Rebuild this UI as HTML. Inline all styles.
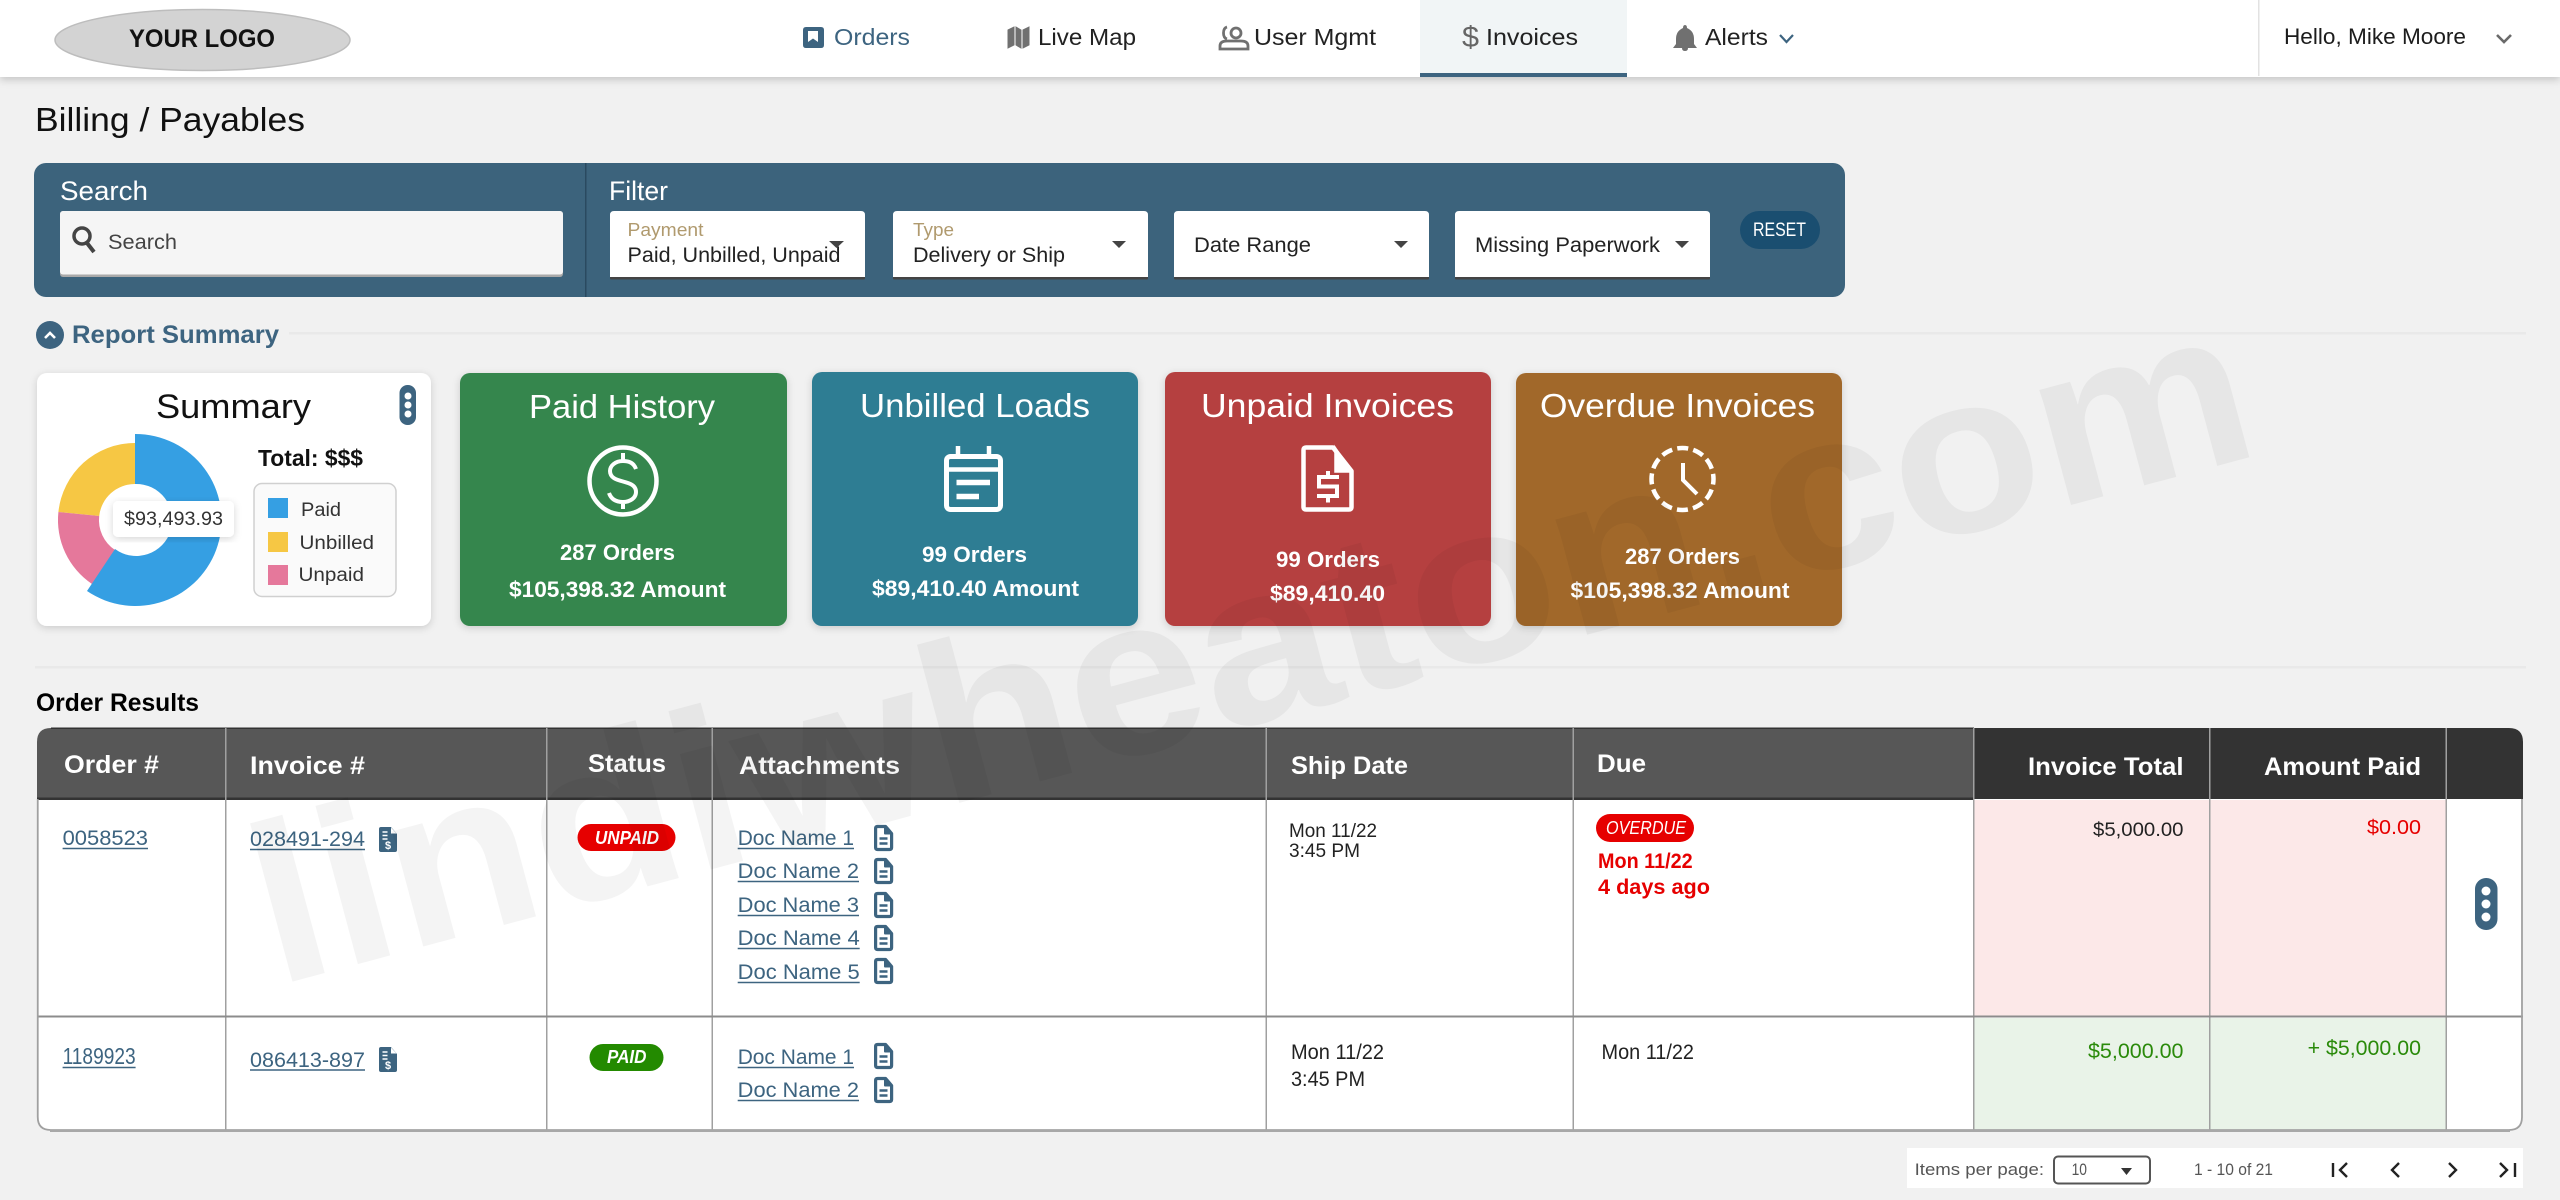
<!DOCTYPE html>
<html lang="en"><head><meta charset="utf-8"><title>Billing / Payables</title>
<style>
html,body{margin:0;padding:0;background:#f1f1f1;width:2560px;height:1200px;overflow:hidden}
svg{display:block}
text{font-family:"Liberation Sans",Arial,sans-serif}
.b{font-weight:700}
.lk{fill:#3d6480}
</style></head><body>
<svg xmlns="http://www.w3.org/2000/svg" width="2560" height="1200" viewBox="0 0 2560 1200">
<defs>
<filter id="sh" x="-5%" y="-20%" width="110%" height="160%"><feDropShadow dx="0" dy="3" stdDeviation="4" flood-color="#000" flood-opacity=".18"/></filter>
<filter id="sh2" x="-10%" y="-10%" width="120%" height="125%"><feDropShadow dx="0" dy="2" stdDeviation="4" flood-color="#000" flood-opacity=".16"/></filter>
<g id="doc" fill="none" stroke="#3d6480" stroke-width="3.200" stroke-linejoin="round"><path d="M1.600 3.500q0-2 2-2h8l6 7v14q0 2-2 2h-12q-2 0-2-2z"/><path d="M11 1.500v7h6.500" fill="#3d6480" stroke-width="2"/><path d="M5.500 13.500h8M5.500 18.500h8" stroke-width="2.600"/></g>
<g id="inv"><path d="M0 2q0-2 2-2h10l6 7v16q0 2-2 2H2q-2 0-2-2z" fill="#3d6480"/><path d="M12 .5v6h5.500" fill="#fff"/><path d="M3.500 5h5M3.500 8.500h5M3.500 12h5" stroke="#fff" stroke-width="1.600"/><text x="9" y="22" font-size="11" class="b" text-anchor="middle" fill="#fff">$</text></g>
</defs>

<rect width="2560" height="1200" fill="#f1f1f1"/>

<!-- header -->
<rect x="0" y="0" width="2560" height="77" fill="#fff" filter="url(#sh)"/>
<ellipse cx="202.500" cy="40" rx="147.500" ry="30.500" fill="#d3d3d3" stroke="#bdbdbd" stroke-width="1.500"/>
<text x="129" y="47" font-size="25" class="b" fill="#111" textLength="146" lengthAdjust="spacingAndGlyphs">YOUR LOGO</text>

<path d="M806 27h15q3 0 3 3v15q0 3-3 3h-15q-3 0-3-3V30q0-3 3-3z" fill="#3d6480"/><path d="M808 31h10v11l-5-3.500-5 3.500z" fill="#fff"/>
<text x="834" y="45" font-size="23" fill="#3d6480" textLength="76" lengthAdjust="spacingAndGlyphs">Orders</text>

<path d="M1008 30l6 -3v18l-6 3zM1016 27l5 3v18l-5-3zM1023 30l6-3v18l-6 3z" fill="#707070" stroke="#707070" stroke-width="1"/>
<text x="1038" y="45" font-size="23" fill="#222" textLength="98" lengthAdjust="spacingAndGlyphs">Live Map</text>

<g fill="none" stroke="#707070" stroke-width="2.800"><circle cx="1236" cy="33" r="5"/><path d="M1220 49v-3q0-5 7-5h14q7 0 7 5v3z"/><path d="M1227 27q-3.500 1-3.500 6t3.500 6"/></g>
<text x="1254" y="45" font-size="23" fill="#222" textLength="122" lengthAdjust="spacingAndGlyphs">User Mgmt</text>

<rect x="1420" y="0" width="207" height="73" fill="#f1f5f6"/><rect x="1420" y="73" width="207" height="4" fill="#3d6480"/>
<text x="1462" y="47" font-size="30" fill="#666" textLength="17" lengthAdjust="spacingAndGlyphs">$</text>
<text x="1486" y="45" font-size="23" fill="#222" textLength="92" lengthAdjust="spacingAndGlyphs">Invoices</text>

<path d="M1685 25q2 0 2 3q7 3 7 11v5l3 4h-24l3-4v-5q0-8 7-11q0-3 2-3zM1682 48h6q0 3-3 3t-3-3z" fill="#707070"/>
<text x="1705" y="45" font-size="23" fill="#222" textLength="63" lengthAdjust="spacingAndGlyphs">Alerts</text>
<path d="M1780 35l6.500 7 6.500-7" fill="none" stroke="#3d6480" stroke-width="2.200"/>

<rect x="2258" y="0" width="1.500" height="76" fill="#e2e2e2"/>
<text x="2284" y="44" font-size="22" fill="#1c1c1c" textLength="182" lengthAdjust="spacingAndGlyphs">Hello, Mike Moore</text>
<path d="M2497 35l7 7 7-7" fill="none" stroke="#6a6a6a" stroke-width="2.600"/>

<!-- title -->
<text x="35" y="131" font-size="33" fill="#111" textLength="270" lengthAdjust="spacingAndGlyphs">Billing / Payables</text>

<!-- filter panel -->
<rect x="34" y="163" width="1811" height="134" rx="12" fill="#3c637c"/>
<rect x="585" y="163" width="1.500" height="134" fill="#2a4a60"/>
<text x="60" y="200" font-size="27" fill="#fff" textLength="88" lengthAdjust="spacingAndGlyphs">Search</text>
<text x="609" y="200" font-size="27" fill="#fff" textLength="59" lengthAdjust="spacingAndGlyphs">Filter</text>

<rect x="60" y="211" width="503" height="66" rx="3" fill="#a9a9a9"/><rect x="60" y="211" width="503" height="63.500" rx="3" fill="#f5f5f5"/>
<circle cx="82" cy="236" r="8" fill="none" stroke="#444" stroke-width="3.500"/><path d="M87 243l7 9" stroke="#444" stroke-width="4"/>
<text x="108" y="249" font-size="21" fill="#444" textLength="69" lengthAdjust="spacingAndGlyphs">Search</text>

<g fill="#444">
<rect x="610" y="260" width="255" height="19.500" rx="1"/><rect x="893" y="260" width="255" height="19.500" rx="1"/><rect x="1174" y="260" width="255" height="19.500" rx="1"/><rect x="1455" y="260" width="255" height="19.500" rx="1"/>
</g>
<g fill="#fff">
<path d="M610 277V215q0-4 4-4H861q4 0 4 4V277ZM893 277V215q0-4 4-4H1144q4 0 4 4V277ZM1174 277V215q0-4 4-4H1425q4 0 4 4V277ZM1455 277V215q0-4 4-4H1706q4 0 4 4V277Z"/>
</g>
<text x="627.500" y="236" font-size="18" fill="#b09a6e" textLength="76" lengthAdjust="spacingAndGlyphs">Payment</text>
<text x="627.500" y="262" font-size="21" fill="#222" textLength="213" lengthAdjust="spacingAndGlyphs">Paid, Unbilled, Unpaid</text>
<text x="913" y="236" font-size="18" fill="#b09a6e" textLength="41" lengthAdjust="spacingAndGlyphs">Type</text>
<text x="913" y="262" font-size="21" fill="#222" textLength="152" lengthAdjust="spacingAndGlyphs">Delivery or Ship</text>
<text x="1194" y="252" font-size="21" fill="#222" textLength="117" lengthAdjust="spacingAndGlyphs">Date Range</text>
<text x="1475" y="252" font-size="21" fill="#222" textLength="185" lengthAdjust="spacingAndGlyphs">Missing Paperwork</text>
<g fill="#444"><path d="M829 241h15l-7.500 7zM1112 241h14l-7 7zM1394 241h14l-7 7zM1675 241h14l-7 7z"/></g>
<rect x="1740" y="211" width="80" height="38" rx="19" fill="#1a4e70"/>
<text x="1753" y="236" font-size="19" fill="#fff" textLength="53" lengthAdjust="spacingAndGlyphs">RESET</text>

<!-- report summary -->
<circle cx="50" cy="335" r="14" fill="#3d6480"/><path d="M45 338l5-5 5 5" fill="none" stroke="#fff" stroke-width="2.600"/>
<text x="72" y="343" font-size="25" class="b" fill="#3d6480" textLength="207" lengthAdjust="spacingAndGlyphs">Report Summary</text>
<rect x="289" y="332" width="2237" height="2.500" fill="#e9e9e9"/>

<!-- summary card -->
<rect x="37" y="373" width="394" height="253" rx="10" fill="#fff" filter="url(#sh2)"/>
<text x="156" y="418" font-size="34" fill="#111" textLength="155" lengthAdjust="spacingAndGlyphs">Summary</text>
<rect x="399.500" y="385" width="16.500" height="40" rx="8" fill="#3d6480"/><g fill="#fff"><circle cx="408" cy="396" r="3.500"/><circle cx="408" cy="405" r="3.500"/><circle cx="408" cy="414" r="3.500"/></g>

<!-- donut -->
<path d="M135 443A77 77 0 0 0 58.400 512L99.200 516A36 36 0 0 1 135 484Z" fill="#f6c744"/>
<path d="M58.400 512A77 77 0 0 0 92 584L115 550A36 36 0 0 1 99.200 516Z" fill="#e5789b"/>
<path d="M135 434A86 86 0 1 1 87 591L115 549A36 36 0 1 0 135 484Z" fill="#359fe3"/>
<rect x="113" y="501" width="121" height="36" rx="5" fill="#fff" filter="url(#sh2)"/>
<text x="124" y="525" font-size="19" fill="#333" textLength="99" lengthAdjust="spacingAndGlyphs">$93,493.93</text>
<text x="258" y="466" font-size="23" class="b" fill="#111" textLength="105" lengthAdjust="spacingAndGlyphs">Total: $$$</text>
<rect x="254" y="483.500" width="142" height="113" rx="8" fill="#fafafa" stroke="#d0d0d0" stroke-width="1.500"/>
<rect x="268" y="498" width="20" height="20" fill="#359fe3"/><rect x="268" y="532" width="20" height="20" fill="#f6c744"/><rect x="268" y="565" width="20" height="20" fill="#e5789b"/>
<text x="301" y="516" font-size="19" fill="#333" textLength="40" lengthAdjust="spacingAndGlyphs">Paid</text>
<text x="299.500" y="549" font-size="19" fill="#333" textLength="74.500" lengthAdjust="spacingAndGlyphs">Unbilled</text>
<text x="298.500" y="581" font-size="19" fill="#333" textLength="65.500" lengthAdjust="spacingAndGlyphs">Unpaid</text>

<!-- cards -->
<rect x="460" y="373" width="327" height="253" rx="10" fill="#35864d" filter="url(#sh2)"/>
<rect x="812" y="372" width="326" height="254" rx="10" fill="#2e7d93" filter="url(#sh2)"/>
<rect x="1165" y="372" width="326" height="254" rx="10" fill="#b54141" filter="url(#sh2)"/>
<rect x="1516" y="373" width="326" height="253" rx="10" fill="#a1682a" filter="url(#sh2)"/>

<g fill="#fff">
<text x="529" y="418" font-size="33" textLength="186" lengthAdjust="spacingAndGlyphs">Paid History</text>
<text x="860" y="417" font-size="33" textLength="230" lengthAdjust="spacingAndGlyphs">Unbilled Loads</text>
<text x="1201" y="417" font-size="33" textLength="253" lengthAdjust="spacingAndGlyphs">Unpaid Invoices</text>
<text x="1540" y="417" font-size="33" textLength="275" lengthAdjust="spacingAndGlyphs">Overdue Invoices</text>
<g class="b" font-size="22">
<text x="560" y="560" textLength="115" lengthAdjust="spacingAndGlyphs">287 Orders</text>
<text x="509" y="597" textLength="217" lengthAdjust="spacingAndGlyphs">$105,398.32 Amount</text>
<text x="922" y="562" textLength="105" lengthAdjust="spacingAndGlyphs">99 Orders</text>
<text x="872" y="596" textLength="207" lengthAdjust="spacingAndGlyphs">$89,410.40 Amount</text>
<text x="1276" y="567" textLength="104" lengthAdjust="spacingAndGlyphs">99 Orders</text>
<text x="1270" y="601" textLength="115" lengthAdjust="spacingAndGlyphs">$89,410.40</text>
<text x="1625" y="564" textLength="115" lengthAdjust="spacingAndGlyphs">287 Orders</text>
<text x="1570.500" y="598" textLength="219" lengthAdjust="spacingAndGlyphs">$105,398.32 Amount</text>
</g>
</g>
<!-- card icons -->
<g fill="none" stroke="#fff">
<circle cx="623" cy="481" r="33.500" stroke-width="4.500"/>
<path d="M636 469c-2-6-7-8-13-8c-8 0-13 5-13 10c0 14 26 7 26 21c0 6-6 10-13 10c-7 0-12-3-14-9M623 453v8M623 501v8" stroke-width="4"/>
<rect x="946.500" y="456.500" width="54" height="53" rx="4" stroke-width="5"/>
<path d="M958 446v10M989 446v10M946 469.500h54" stroke-width="4.500"/>
<path d="M956.500 482.500h33.500M956.500 496.500h22.500" stroke-width="5.500"/>
<path d="M1333 447.500h-27q-2.500 0-2.500 2.500v57q0 2.500 2.500 2.500h43q2.500 0 2.500-2.500v-36z" stroke-width="4.500" stroke-linejoin="round"/>
<path d="M1335 447l17 25h-17z" fill="#fff" stroke-width="1.500"/>
<path d="M1339 477h-20v9.500h18v9.500h-20M1328 471v6M1328 496v6.500" stroke-width="4"/>
<circle cx="1682.500" cy="479" r="31" stroke-width="4.500" stroke-dasharray="11 5.230" stroke-dashoffset="5.500"/>
<path d="M1683 463v17l14 14" stroke-width="4"/>
</g>

<!-- order results -->
<rect x="35" y="666" width="2491" height="2.500" fill="#e9e9e9"/>
<text x="36" y="711" font-size="25" class="b" fill="#000" textLength="163" lengthAdjust="spacingAndGlyphs">Order Results</text>

<!-- table -->
<path d="M37 799H2523V1117q0 14-14 14H51q-14 0-14-14Z" fill="#fff"/>
<rect x="1974" y="800" width="472" height="216" fill="#fce8e8"/>
<rect x="1974" y="1018" width="472" height="113" fill="#e9f3e8"/>
<path d="M37 799V742q0-14 14-14H1974V799Z" fill="#575757"/>
<path d="M1974 799V728H2509q14 0 14 14V799Z" fill="#333"/>
<rect x="37" y="797.500" width="1937" height="2.500" fill="#333"/>
<rect x="51" y="727.500" width="1923" height="1.500" fill="#333"/>
<g fill="#a0a0a0">
<rect x="225" y="728" width="1.500" height="403"/><rect x="546" y="728" width="1.500" height="403"/><rect x="711.500" y="728" width="1.500" height="403"/><rect x="1265.500" y="728" width="1.500" height="403"/><rect x="1572.500" y="728" width="1.500" height="403"/><rect x="1973" y="728" width="1.500" height="403"/><rect x="2209" y="728" width="1.500" height="403"/><rect x="2445.500" y="728" width="1.500" height="403"/>
</g>
<rect x="37" y="1015.500" width="2486" height="2" fill="#8c8c8c"/>
<path d="M37.750 799V1117q0 13 13 13H2509q13 0 13-13V799" fill="none" stroke="#a0a0a0" stroke-width="1.800"/>
<rect x="50" y="1129.500" width="2460" height="2.500" fill="#a8a8a8"/>

<g fill="#fff" class="b" font-size="25">
<text x="64" y="773" textLength="95" lengthAdjust="spacingAndGlyphs">Order #</text>
<text x="250" y="774" textLength="115" lengthAdjust="spacingAndGlyphs">Invoice #</text>
<text x="588" y="772" textLength="78" lengthAdjust="spacingAndGlyphs">Status</text>
<text x="739" y="774" textLength="161" lengthAdjust="spacingAndGlyphs">Attachments</text>
<text x="1291" y="774" textLength="117" lengthAdjust="spacingAndGlyphs">Ship Date</text>
<text x="1597" y="772" textLength="49" lengthAdjust="spacingAndGlyphs">Due</text>
<text x="2028" y="775" textLength="155.500" lengthAdjust="spacingAndGlyphs">Invoice Total</text>
<text x="2264" y="775" textLength="157" lengthAdjust="spacingAndGlyphs">Amount Paid</text>
</g>

<!-- links -->
<g class="lk" font-size="21">
<text x="62.600" y="845" textLength="85.400" lengthAdjust="spacingAndGlyphs">0058523</text>
<text x="250" y="846" textLength="115" lengthAdjust="spacingAndGlyphs">028491-294</text>
<text x="62.600" y="1064" font-size="23" textLength="73" lengthAdjust="spacingAndGlyphs">1189923</text>
<text x="250" y="1067" textLength="115" lengthAdjust="spacingAndGlyphs">086413-897</text>
<text x="737.700" y="845" textLength="116.300" lengthAdjust="spacingAndGlyphs">Doc Name 1</text>
<text x="737.700" y="878" textLength="121.300" lengthAdjust="spacingAndGlyphs">Doc Name 2</text>
<text x="737.700" y="912" textLength="121.300" lengthAdjust="spacingAndGlyphs">Doc Name 3</text>
<text x="737.700" y="945" textLength="122" lengthAdjust="spacingAndGlyphs">Doc Name 4</text>
<text x="737.700" y="979" textLength="122" lengthAdjust="spacingAndGlyphs">Doc Name 5</text>
<text x="737.700" y="1064" textLength="116.300" lengthAdjust="spacingAndGlyphs">Doc Name 1</text>
<text x="737.700" y="1097" textLength="121.300" lengthAdjust="spacingAndGlyphs">Doc Name 2</text>
</g>
<g stroke="#3d6480" stroke-width="1.500">
<path d="M62.600 848.500h85.400M250 849.500h115M62.600 1067.500h73M250 1070h115M737.700 848.500h116.300M737.700 881.500h121.300M737.700 915.500h121.300M737.700 948.500h122M737.700 982.500h122M737.700 1067.500h116.300M737.700 1100.500h121.300"/>
</g>
<use href="#inv" x="379" y="827"/><use href="#inv" x="379" y="1047"/>
<use href="#doc" x="874" y="825"/><use href="#doc" x="874" y="858"/><use href="#doc" x="874" y="892"/><use href="#doc" x="874" y="925"/><use href="#doc" x="874" y="958"/><use href="#doc" x="874" y="1043"/><use href="#doc" x="874" y="1077"/>

<!-- badges -->
<rect x="577.500" y="824" width="98" height="27" rx="13.500" fill="#e60000"/>
<text x="595" y="844" font-size="18" class="b" font-style="italic" fill="#fff" textLength="64" lengthAdjust="spacingAndGlyphs">UNPAID</text>
<rect x="589.500" y="1044" width="74" height="27" rx="13.500" fill="#238a00"/>
<text x="607" y="1063" font-size="18" class="b" font-style="italic" fill="#fff" textLength="39.500" lengthAdjust="spacingAndGlyphs">PAID</text>
<rect x="1596" y="814" width="98" height="28" rx="14" fill="#e60000"/>
<text x="1606" y="834" font-size="18" font-style="italic" fill="#fff" textLength="80" lengthAdjust="spacingAndGlyphs">OVERDUE</text>

<!-- row 1 -->
<text x="1289" y="837" font-size="19" fill="#222" textLength="88" lengthAdjust="spacingAndGlyphs">Mon 11/22</text>
<text x="1289" y="857" font-size="19" fill="#222" textLength="71" lengthAdjust="spacingAndGlyphs">3:45 PM</text>
<text x="1598" y="868" font-size="21" class="b" fill="#e60000" textLength="94.600" lengthAdjust="spacingAndGlyphs">Mon 11/22</text>
<text x="1598" y="894" font-size="21" class="b" fill="#e60000" textLength="112" lengthAdjust="spacingAndGlyphs">4 days ago</text>
<text x="2093" y="836" font-size="19" fill="#222" textLength="90.500" lengthAdjust="spacingAndGlyphs">$5,000.00</text>
<text x="2367" y="834" font-size="20" fill="#e60000" textLength="54" lengthAdjust="spacingAndGlyphs">$0.00</text>
<rect x="2475" y="878" width="22.500" height="52" rx="11" fill="#3d6480"/><g fill="#fff"><circle cx="2486" cy="891" r="4.500"/><circle cx="2486" cy="904" r="4.500"/><circle cx="2486" cy="917" r="4.500"/></g>

<!-- row 2 -->
<text x="1291" y="1059" font-size="21" fill="#222" textLength="93" lengthAdjust="spacingAndGlyphs">Mon 11/22</text>
<text x="1291" y="1086" font-size="21" fill="#222" textLength="74" lengthAdjust="spacingAndGlyphs">3:45 PM</text>
<text x="1601.500" y="1059" font-size="21" fill="#222" textLength="92.500" lengthAdjust="spacingAndGlyphs">Mon 11/22</text>
<text x="2088" y="1058" font-size="21" fill="#2a8a0a" textLength="95.500" lengthAdjust="spacingAndGlyphs">$5,000.00</text>
<text x="2307.600" y="1055" font-size="21" fill="#2a8a0a" textLength="113.400" lengthAdjust="spacingAndGlyphs">+ $5,000.00</text>

<!-- pagination -->
<rect x="1907" y="1148" width="616" height="40" fill="#fff"/>
<text x="1914.600" y="1175" font-size="17" fill="#555" textLength="129.400" lengthAdjust="spacingAndGlyphs">Items per page:</text>
<rect x="2054" y="1156.500" width="96" height="27" rx="4" fill="#fff" stroke="#555" stroke-width="2"/>
<text x="2071.600" y="1175" font-size="17" fill="#555" textLength="15.400" lengthAdjust="spacingAndGlyphs">10</text>
<path d="M2121 1168h11l-5.500 7z" fill="#333"/>
<text x="2194" y="1175" font-size="17" fill="#555" textLength="79" lengthAdjust="spacingAndGlyphs">1 - 10 of 21</text>
<g fill="none" stroke="#222" stroke-width="2.400">
<path d="M2333 1163v14M2347 1163l-7 7 7 7"/>
<path d="M2399 1163l-7 7 7 7"/>
<path d="M2449 1163l7 7-7 7"/>
<path d="M2500 1163l7 7-7 7M2515 1163v14"/>
</g>

<!-- watermark -->
<text x="276" y="986" transform="rotate(-15 276 986)" font-size="226" class="b" fill="#000" fill-opacity=".045" textLength="2058" lengthAdjust="spacingAndGlyphs">lindiwheaton.com</text>
</svg>
</body></html>
